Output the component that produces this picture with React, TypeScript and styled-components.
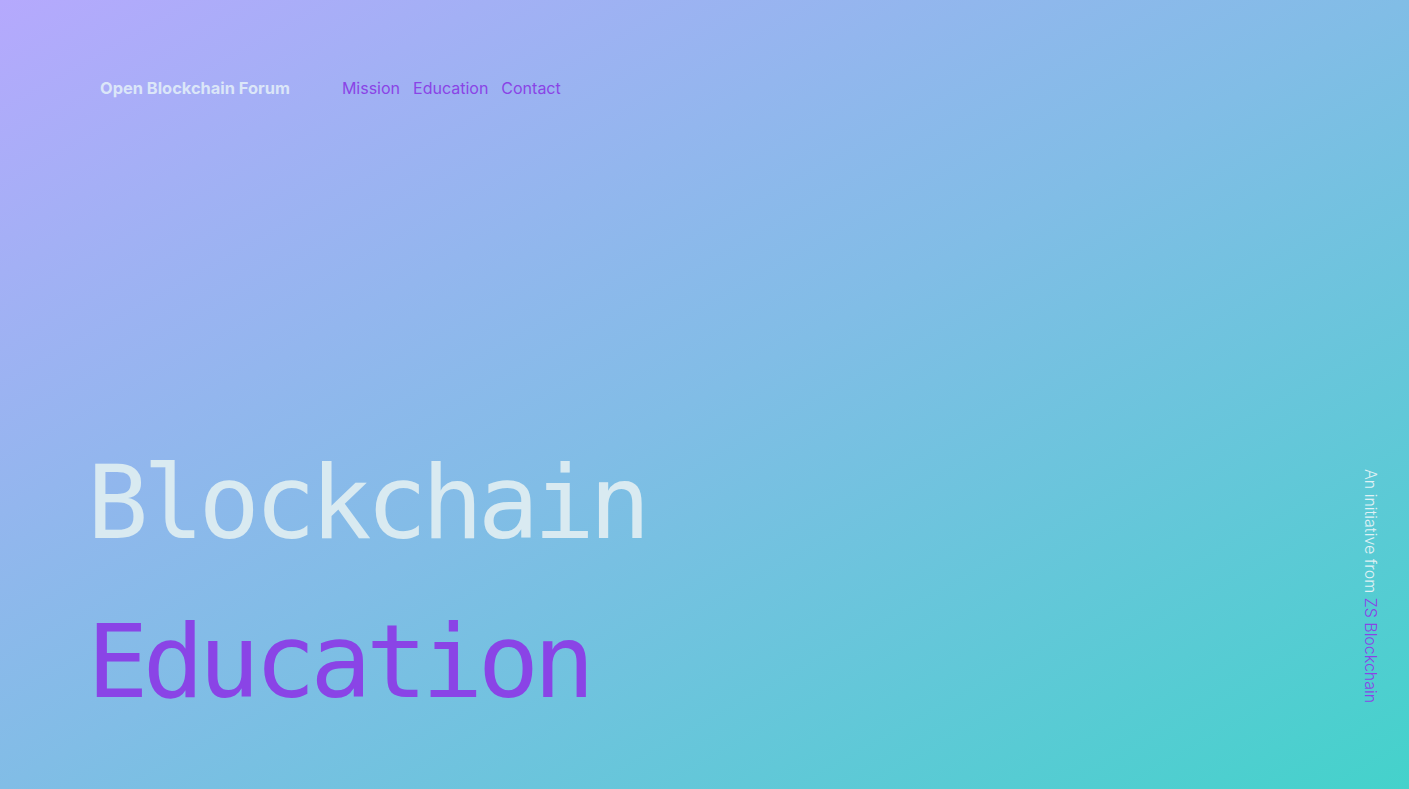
import React from "react";
import styled, { createGlobalStyle } from "styled-components";

const GlobalStyle = createGlobalStyle`
  html, body { margin: 0; padding: 0; }
  body { font-family: Inter, "Noto Sans", sans-serif; }
  * { box-sizing: border-box; }
`;

const Page = styled.div`
  width: 100%;
  height: 100vh;
  min-height: 789px;
  display: flex;
  flex-direction: column;
  background: linear-gradient(to bottom right, #b5a9fd 0%, #81bde6 50%, #44d2cb 100%);
  overflow: hidden;
`;

const Header = styled.header`
  display: flex;
  align-items: center;
  padding: 78px 0 0 100px;
  gap: 52px;
`;

const Brand = styled.a`
  font-family: Inter, sans-serif;
  font-size: 16.4px;
  font-weight: 700;
  color: #dbe6f8;
  text-decoration: none;
  line-height: 20px;
`;

const Nav = styled.nav`
  display: flex;
  gap: 13px;
`;

const NavLink = styled.a`
  font-family: Inter, sans-serif;
  font-size: 16px;
  font-weight: 400;
  color: #8a44e6;
  text-decoration: none;
  line-height: 20px;
`;

const Main = styled.main`
  flex: 1;
  display: flex;
  align-items: flex-end;
  justify-content: space-between;
  padding: 0 29px 86px 87px;
`;

const Hero = styled.h1`
  margin: 0 0 -38px;
  display: flex;
  flex-direction: column;
  font-family: "DejaVu Sans Mono", monospace;
  font-weight: 400;
  font-size: 102px;
  letter-spacing: -5.6px;
  line-height: 159px;
`;

const HeroLine = styled.span<{ $accent?: boolean }>`
  display: block;
  color: ${(p) => (p.$accent ? "#8a44e6" : "#d9eaf1")};
`;

const Aside = styled.p`
  margin: 0;
  writing-mode: vertical-rl;
  font-family: Inter, sans-serif;
  font-size: 16px;
  font-weight: 300;
  color: #e0f1f5;
  line-height: 18px;
`;

const Accent = styled.span`
  color: #8a44e6;
`;

export default function App() {
  return (
    <>
      <GlobalStyle />
      <Page>
        <Header>
          <Brand href="#">Open Blockchain Forum</Brand>
          <Nav>
            <NavLink href="#">Mission</NavLink>
            <NavLink href="#">Education</NavLink>
            <NavLink href="#">Contact</NavLink>
          </Nav>
        </Header>
        <Main>
          <Hero>
            <HeroLine>Blockchain</HeroLine>
            <HeroLine $accent>Education</HeroLine>
          </Hero>
          <Aside>
            An initiative from <Accent>ZS Blockchain</Accent>
          </Aside>
        </Main>
      </Page>
    </>
  );
}
